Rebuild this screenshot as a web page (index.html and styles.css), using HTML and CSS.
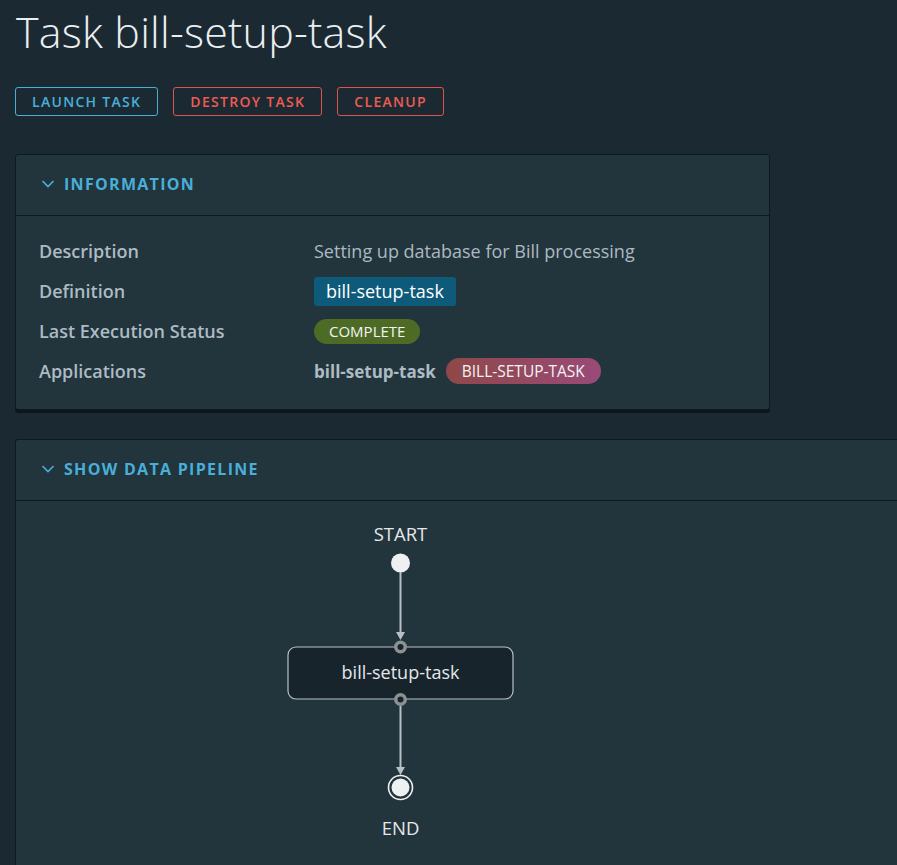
FILE: index.html
```html
<!DOCTYPE html>
<html lang="en">
<head>
<meta charset="utf-8">
<title>Task bill-setup-task</title>
<link rel="stylesheet" href="styles.css">
</head>
<body>
<main class="page">
  <h1 class="title">Task bill-setup-task</h1>
  <div class="actions">
    <button class="btn btn-primary">LAUNCH TASK</button>
    <button class="btn btn-danger">DESTROY TASK</button>
    <button class="btn btn-danger">CLEANUP</button>
  </div>

  <section class="card card-info">
    <header class="card-header">
      <svg class="chev" width="14" height="14" viewBox="0 0 14 14"><path d="M1.5 4 L7 9.5 L12.5 4" fill="none" stroke="#49afd9" stroke-width="1.7"/></svg>
      <span>INFORMATION</span>
    </header>
    <div class="card-body info-grid">
      <div class="label">Description</div>
      <div class="value">Setting up database for Bill processing</div>
      <div class="label">Definition</div>
      <div class="value"><span class="def-tag">bill-setup-task</span></div>
      <div class="label">Last Execution Status</div>
      <div class="value"><span class="pill pill-green">COMPLETE</span></div>
      <div class="label">Applications</div>
      <div class="value"><strong class="app-name">bill-setup-task</strong><span class="pill pill-app">BILL-SETUP-TASK</span></div>
    </div>
  </section>

  <section class="card card-pipeline">
    <header class="card-header">
      <svg class="chev" width="14" height="14" viewBox="0 0 14 14"><path d="M1.5 4 L7 9.5 L12.5 4" fill="none" stroke="#49afd9" stroke-width="1.7"/></svg>
      <span>SHOW DATA PIPELINE</span>
    </header>
    <div class="pipeline-body">
      <svg class="diagram" width="880" height="364" viewBox="0 0 880 364">
        <text class="dlabel" x="384.5" y="39" text-anchor="middle">START</text>
        <circle cx="384.5" cy="61" r="9.5" fill="#eef0f2"/>
        <line x1="384.5" y1="70" x2="384.5" y2="131" stroke="#b8c0c5" stroke-width="2"/>
        <path d="M380 130 L389 130 L384.5 138 Z" fill="#b8c0c5"/>
        <rect x="272" y="145" width="225" height="52" rx="8" fill="#18242b" stroke="#b9c1c6" stroke-width="1.2"/>
        <text class="nlabel" x="384.5" y="177" text-anchor="middle">bill-setup-task</text>
        <circle cx="384.5" cy="145" r="6.5" fill="#8b9195"/>
        <circle cx="384.5" cy="145" r="3" fill="#1a252b"/>
        <circle cx="384.5" cy="197.5" r="6.5" fill="#8b9195"/>
        <circle cx="384.5" cy="197.5" r="3" fill="#1a252b"/>
        <line x1="384.5" y1="204" x2="384.5" y2="266" stroke="#b8c0c5" stroke-width="2"/>
        <path d="M380 265 L389 265 L384.5 273 Z" fill="#b8c0c5"/>
        <circle cx="384.5" cy="285.5" r="12" fill="none" stroke="#eef0f2" stroke-width="1.6"/>
        <circle cx="384.5" cy="285.5" r="9" fill="#eef0f2"/>
        <text class="dlabel" x="384.5" y="333" text-anchor="middle">END</text>
      </svg>
    </div>
  </section>
</main>
</body>
</html>
```

FILE: styles.css
```css
html, body {
  margin: 0;
  padding: 0;
  background: #1b2a32;
  overflow: hidden;
  height: 100%;
}
body {
  font-family: "Open Sans", "Liberation Sans", sans-serif;
  color: #adbbc4;
}
.page {
  padding: 8px 0 0 15px;
}
.title {
  margin: 0 0 0 1px;
  font-size: 43px;
  font-weight: 300;
  color: #eaeef1;
  line-height: 48px;
  letter-spacing: 0.2px;
}
.actions {
  display: flex;
  gap: 15px;
  margin-top: 31px;
}
.btn {
  height: 29px;
  padding: 0 16px;
  background: transparent;
  border-radius: 3px;
  font-family: inherit;
  font-size: 14px;
  font-weight: 600;
  letter-spacing: 1.3px;
  cursor: pointer;
}
.btn-primary {
  border: 1px solid #49afd9;
  color: #49afd9;
}
.btn-danger {
  border: 1px solid #e0524a;
  color: #f05a52;
}
.card {
  background: #22343c;
  border: 1px solid #0f1a20;
  border-radius: 3px;
  box-shadow: 0 3px 0 #0e161b;
}
.card-info {
  width: 753px;
  margin-top: 38px;
}
.card-pipeline {
  width: 1000px;
  margin-top: 29px;
}
.card-header {
  height: 61px;
  box-sizing: border-box;
  display: flex;
  align-items: center;
  padding: 0 0 3px 25px;
  gap: 9px;
  border-bottom: 1px solid #0f1a20;
  color: #49afd9;
  font-size: 16px;
  font-weight: 700;
  letter-spacing: 1.3px;
}
.chev {
  margin-top: 1px;
}
.info-grid {
  display: grid;
  grid-template-columns: 275px 1fr;
  grid-auto-rows: 40px;
  align-items: center;
  padding: 15px 23px 18px;
}
.label {
  font-size: 18px;
  font-weight: 600;
  color: #adbbc4;
}
.value {
  font-size: 18px;
  color: #acb9c1;
  display: flex;
  align-items: center;
}
.def-tag {
  background: #0e5a7a;
  color: #ffffff;
  padding: 0 12px;
  height: 29px;
  line-height: 29px;
  border-radius: 3px;
}
.pill {
  border-radius: 13px;
  color: #f2f4f5;
  font-size: 15px;
  height: 25px;
  line-height: 25px;
  padding: 0 15px;
}
.pill-green {
  background: #4e6b26;
}
.app-name {
  font-size: 17px;
  font-weight: 700;
  color: #adbbc4;
  margin-right: 10px;
}
.pill-app {
  background: linear-gradient(90deg, #8f4848, #9a4a78);
  font-size: 15.5px;
  height: 26px;
  line-height: 26px;
  padding: 0 16px;
}
.pipeline-body {
  height: 380px;
  padding-top: 1px;
}
.diagram {
  display: block;
}
.dlabel {
  font-family: "Open Sans", "Liberation Sans", sans-serif;
  font-size: 18.5px;
  fill: #e4e8eb;
}
.nlabel {
  font-family: "Open Sans", "Liberation Sans", sans-serif;
  font-size: 18px;
  fill: #e4e8eb;
}
```
